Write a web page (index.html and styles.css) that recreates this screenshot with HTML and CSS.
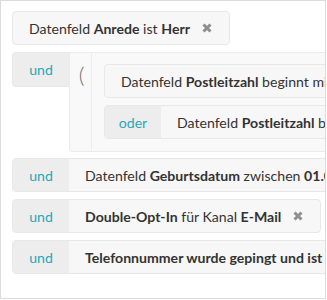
FILE: index.html
```html
<!DOCTYPE html>
<html lang="de">
<head>
    <meta charset="UTF-8">
    <title>Filter</title>
    <link rel="stylesheet" href="styles.css">
</head>
<body>
    <div class="frame">
        <!-- einzelne Bedingung -->
        <div class="chip">
            <div class="content">Datenfeld <b>Anrede</b> ist <b>Herr</b>
                <svg class="remove" viewBox="0 0 10 10"><path d="M1.5 1.5 L8.5 8.5 M8.5 1.5 L1.5 8.5"/></svg>
            </div>
        </div>

        <!-- Gruppe -->
        <div class="group-row">
            <div class="op op-top">und</div>
            <div class="group">
                <div class="paren">(</div>
                <div class="group-body">
                    <div class="chip">
                        <div class="content">Datenfeld <b>Postleitzahl</b> beginnt mit <b>1</b></div>
                    </div>
                    <div class="chip">
                        <div class="op">oder</div>
                        <div class="content">Datenfeld <b>Postleitzahl</b> beginnt mit <b>2</b></div>
                    </div>
                </div>
            </div>
        </div>

        <div class="chip">
            <div class="op">und</div>
            <div class="content">Datenfeld <b>Geburtsdatum</b> zwischen <b>01.01.1970</b> und <b>31.12.1990</b></div>
        </div>

        <div class="chip">
            <div class="op">und</div>
            <div class="content"><b>Double-Opt-In</b> für Kanal <b>E-Mail</b>
                <svg class="remove" viewBox="0 0 10 10"><path d="M1.5 1.5 L8.5 8.5 M8.5 1.5 L1.5 8.5"/></svg>
            </div>
        </div>

        <div class="chip">
            <div class="op">und</div>
            <div class="content"><b>Telefonnummer wurde gepingt und ist gültig</b></div>
        </div>
    </div>
</body>
</html>
```
FILE: styles.css
```css
body {
    margin: 0;
    background-color: #fff;
    font-family: Lato, "Open Sans", sans-serif;
    font-size: 14.1px;
    color: #333;
}

.frame {
    width: 326px;
    height: 299px;
    box-sizing: border-box;
    border: 1px solid #dcdcdc;
    padding: 10px 0 0 11px;
    overflow: hidden;
    display: flex;
    flex-direction: column;
    align-items: flex-start;
    gap: 7px;
}

.chip {
    display: flex;
    flex-shrink: 0;
    height: 34px;
    box-sizing: border-box;
    background-color: #f7f7f7;
    border: 1px solid #e8e8e8;
    border-radius: 4px;
    white-space: nowrap;
}

.chip .op {
    border-radius: 3px 0 0 3px;
}

.op {
    width: 56px;
    flex-shrink: 0;
    background-color: #ededed;
    color: #26a8b9;
    display: flex;
    align-items: center;
    justify-content: center;
}

.content {
    display: flex;
    align-items: center;
    padding: 0 16px;
    white-space: pre;
}

.content b {
    font-weight: 700;
}

.remove {
    width: 10px;
    height: 10px;
    margin-left: 12px;
    margin-right: 1px;
    stroke: #8f8f8f;
    stroke-width: 3;
    stroke-linecap: butt;
}

/* Gruppe mit Klammer */
.group-row {
    display: flex;
    flex-shrink: 0;
    align-items: flex-start;
}

.op-top {
    height: 35px;
    border-radius: 4px 0 0 4px;
    border: 1px solid #e8e8e8;
    border-right: none;
    box-sizing: border-box;
    width: 57px;
}

.group {
    display: flex;
    background-color: #f9f9f9;
    border: 1px solid #ebebeb;
    border-right: none;
    border-radius: 0 0 0 4px;
    margin-bottom: -1px;
}

.paren {
    width: 22px;
    border-right: 1px solid #ededed;
    color: #707070;
    font-size: 22px;
    font-weight: 300;
    text-align: center;
    padding: 8px 0 0 2px;
    box-sizing: border-box;
}

.group-body {
    display: flex;
    flex-direction: column;
    align-items: flex-start;
    gap: 7px;
    padding: 11px 0 12px 12px;
}
```
